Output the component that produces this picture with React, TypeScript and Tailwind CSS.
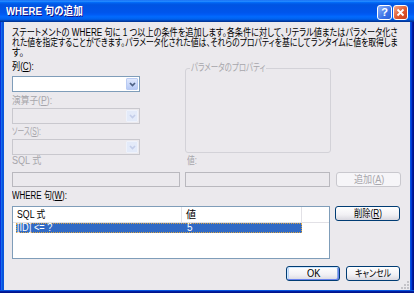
import { useLayoutEffect, useRef, useState, type ReactNode } from 'react';

const FONT = "font-['Liberation_Sans','Noto_Sans_CJK_JP',sans-serif] [font-feature-settings:'palt']";

// MS UI Gothic is much narrower than what we have here, so squeeze the text to the width measured off the screenshot
const Fit = ({ w, children }: { w: number; children: ReactNode }) => {
  const ref = useRef<HTMLSpanElement>(null);
  const [scale, setScale] = useState(1);
  useLayoutEffect(() => {
    if (ref.current) setScale(w / ref.current.scrollWidth);
  }, [w]);
  return (
    <span className="inline-block whitespace-nowrap overflow-visible" style={{ width: w }}>
      <span ref={ref} className="inline-block origin-left" style={{ transform: `scaleX(${scale})` }}>
        {children}
      </span>
    </span>
  );
};

const Chevron = ({ color }: { color: string }) => (
  <svg width="7" height="5" viewBox="0 0 7 5">
    <path d="M1 1 L3.5 3.5 L6 1" fill="none" stroke={color} strokeWidth="1.7" />
  </svg>
);

const Combo = ({ disabled }: { disabled?: boolean }) =>
  disabled ? (
    <div className="w-[128px] h-[16px] border border-[#c9c8ce] bg-[#ebe9ed] flex justify-end p-[1px]">
      <div className="w-[12px] h-full rounded-[1px] border border-[#eef2fb] bg-[#e3eaf9] flex items-center justify-center">
        <Chevron color="#c3cde9" />
      </div>
    </div>
  ) : (
    <div className="w-[128px] h-[16px] border border-[#7f9db9] bg-white flex justify-end p-[1px]">
      <div className="w-[12px] h-full rounded-[1px] border border-[#b9cbf3] bg-[linear-gradient(180deg,#dfe8fd,#b7caf6)] flex items-center justify-center">
        <Chevron color="#4d6185" />
      </div>
    </div>
  );

const Label = ({ children, disabled, className = '' }: { children: ReactNode; disabled?: boolean; className?: string }) => (
  <div className={`h-[12px] leading-[12px] text-[10px] whitespace-nowrap ${disabled ? 'text-[#a7a6ab]' : 'text-black'} ${className}`}>
    {children}
  </div>
);

const Button = ({ children, className = '', isDefault }: { children: ReactNode; className?: string; isDefault?: boolean }) => (
  <div
    className={`h-[15px] shrink-0 rounded-[3px] border border-[#003c74] bg-[linear-gradient(180deg,#ffffff,#f1f0f4_60%,#d9d8e0)] flex items-center justify-center text-[10px] leading-[12px] text-black ${
      isDefault ? 'shadow-[inset_1px_1px_#cee7ff,inset_-1px_-1px_#6982ee,inset_2px_0_#bcd4f6,inset_-2px_0_#89ade4]' : ''
    } ${className}`}
  >
    {children}
  </div>
);

const TitleBar = () => (
  <div className="h-[22px] shrink-0 flex items-center pl-[6px] pr-[6px] bg-[linear-gradient(180deg,#0058ee_0%,#3593ff_4%,#288eff_6%,#127dff_8%,#036ffc_10%,#0262ee_14%,#0057e5_20%,#0054e3_24%,#0055eb_56%,#005bf5_66%,#026afe_76%,#0062ef_86%,#0052d6_92%,#0040ab_94%,#003092_100%)]">
    <span className="text-white font-bold text-[11px] [text-shadow:1px_1px_#0f1089] flex-1">
      <Fit w={77}>WHERE 句の追加</Fit>
    </span>
    <div className="flex gap-[1px] mt-[2px]">
      <div className="w-[15px] h-[15px] rounded-[3px] border border-white bg-[linear-gradient(135deg,#8fb2f8,#3d73e8_60%,#2a5fd8)] flex items-center justify-center text-white font-bold text-[11px] leading-none">
        ?
      </div>
      <div className="w-[15px] h-[15px] rounded-[3px] border border-white bg-[linear-gradient(135deg,#f4a78c,#e0592f_55%,#c83d1c)] flex items-center justify-center">
        <svg width="9" height="9" viewBox="0 0 9 9">
          <path d="M1.5 1.5 L7.5 7.5 M7.5 1.5 L1.5 7.5" stroke="white" strokeWidth="1.8" />
        </svg>
      </div>
    </div>
  </div>
);

export default function App() {
  return (
    <div className={`w-[414px] h-[293px] flex flex-col overflow-hidden ${FONT}`}>
      <TitleBar />
      <div className="flex flex-1 min-h-0">
        <div className="w-[4px] shrink-0 bg-[linear-gradient(90deg,#0831d9_0_1px,#166aee_1px_2px,#0855dd_2px)]" />
        <div className="flex-1 min-w-0 overflow-hidden relative bg-[#ebe9ed] pl-[8px] pr-[9px] pt-[6px] flex flex-col text-black">
          {/* description */}
          <div className="text-[10px] leading-[10px]">
            <div className="h-[10px]"><Fit w={386}>ステートメントの WHERE 句に 1 つ以上の条件を追加します。各条件に対して、リテラル値またはパラメータ化さ</Fit></div>
            <div className="h-[10px]"><Fit w={386}>れた値を指定することができます。パラメータ化された値は、それらのプロパティを基にしてランタイムに値を取得しま</Fit></div>
            <div className="h-[10px]"><Fit w={12}>す。</Fit></div>
          </div>

          {/* column / operator / source + parameter properties */}
          <div className="flex mt-[3px]">
            <div className="w-[168px] shrink-0 flex flex-col">
              <Label><Fit w={22}>列(<span className="underline">C</span>):</Fit></Label>
              <div className="mt-[3px]"><Combo /></div>
              <Label disabled className="mt-[3px]"><Fit w={40}>演算子(<span className="underline">P</span>):</Fit></Label>
              <div className="mt-[1px]"><Combo disabled /></div>
              <Label disabled className="mt-[2px]"><Fit w={29}>ソース(<span className="underline">S</span>):</Fit></Label>
              <div className="mt-[1px]"><Combo disabled /></div>
            </div>
            <div className="ml-[5px] mt-[7px] w-[146px] h-[85px] shrink-0 relative rounded-[3px] border border-[#d3d2d8]">
              <span className="absolute -top-[7px] left-[4px] px-[1px] bg-[#ebe9ed] text-[10px] leading-[12px] text-[#a7a6ab]">
                <Fit w={74}>パラメータのプロパティ</Fit>
              </span>
            </div>
          </div>

          {/* sql / value / add */}
          <div className="flex">
            <div className="w-[168px] shrink-0 flex flex-col">
              <Label disabled><Fit w={29}>SQL 式</Fit></Label>
              <div className="mt-[5px] h-[15px] border border-[#b9b8be] bg-[#ebe9ed]" />
            </div>
            <div className="ml-[5px] w-[145px] shrink-0 flex flex-col">
              <Label disabled className="pl-[2px]"><Fit w={10}>値:</Fit></Label>
              <div className="mt-[5px] h-[15px] border border-[#b9b8be] bg-[#ebe9ed]" />
            </div>
            <div className="ml-[6px] w-[65px] shrink-0 self-end h-[15px] rounded-[3px] border border-[#c9c8ce] bg-[#f6f5f8] flex items-center justify-center text-[10px] leading-[12px] text-[#a7a6ab]">
              <Fit w={30}>追加(<span className="underline">A</span>)</Fit>
            </div>
          </div>

          <Label className="mt-[3px]"><Fit w={55}>WHERE 句(<span className="underline">W</span>):</Fit></Label>

          {/* where list + remove */}
          <div className="flex mt-[4px]">
            <div className="w-[318px] h-[53px] shrink-0 border border-[#7f9db9] bg-white text-[10px]">
              <div className="flex h-[16px] border-b border-[#e2e1e6]">
                <div className="w-[169px] pl-[4px] leading-[16px] border-r border-[#e2e1e6]"><Fit w={28}>SQL 式</Fit></div>
                <div className="w-[120px] pl-[4px] leading-[16px] border-r border-[#e2e1e6]">値</div>
              </div>
              <div className="ml-[3px] w-[286px] h-[10px] bg-[#316ac5] outline-1 outline-dotted outline-[#d9a441] -outline-offset-1 flex text-white leading-[10px]">
                <span className="w-[171px] pl-[1px]"><Fit w={35}>[ID] &lt;= ?</Fit></span>
                <span>5</span>
              </div>
            </div>
            <Button className="ml-[5px] w-[65px]">
              <Fit w={28}>削除(<span className="underline">R</span>)</Fit>
            </Button>
          </div>

          {/* ok / cancel */}
          <div className="flex justify-end gap-[6px] mt-[7px] mr-[1px]">
            <Button isDefault className="w-[54px]"><Fit w={13}>OK</Fit></Button>
            <Button className="w-[54px]"><Fit w={36}>キャンセル</Fit></Button>
          </div>

          {/* resize grip */}
          <svg className="absolute right-[1px] bottom-[1px]" width="8" height="8" viewBox="0 0 8 8">
            {[
              [6, 0], [3, 3], [6, 3], [0, 6], [3, 6], [6, 6],
            ].map(([x, y], i) => (
              <rect key={i} x={x} y={y} width="2" height="2" fill="#c4c3c8" />
            ))}
          </svg>
        </div>
        <div className="w-[4px] shrink-0 bg-[linear-gradient(270deg,#00138c_0_1px,#001ea0_1px_2px,#003bda_2px_3px,#0855dd_3px)]" />
      </div>
      <div className="h-[3px] shrink-0 bg-[linear-gradient(0deg,#00138c_0_1px,#001ea0_1px_2px,#0855dd_2px)]" />
    </div>
  );
}
